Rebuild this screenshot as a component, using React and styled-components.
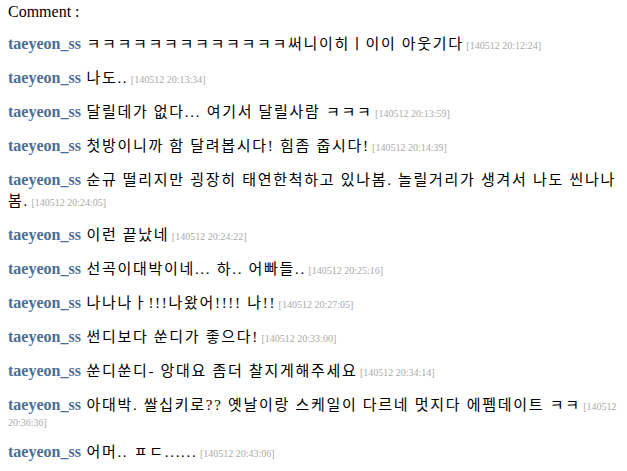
import React from "react";
import styled, { createGlobalStyle } from "styled-components";

const GlobalStyle = createGlobalStyle`
  body {
    margin: 0;
    background: #fff;
  }
`;

// whole board, text flows like an old guestbook page
const Board = styled.div`
  padding: 3px 8px;
  font-family: "Liberation Serif", "Times New Roman", serif;
  color: #000;
`;

const Heading = styled.div`
  font-size: 16px;
  line-height: 18px;
`;

// small base size so a line holding only the stamp stays short
const Entry = styled.div`
  margin-top: 13px;
  font-size: 10px;
  line-height: 13px;
`;

const Name = styled.span`
  font-size: 16px;
  line-height: 18px;
  font-weight: bold;
  color: #4b6e99;
  margin-right: 3px;
`;

const Text = styled.span`
  font-family: "Liberation Serif", "Noto Sans CJK KR", sans-serif;
  font-size: 15px;
  letter-spacing: 1.7px;
  line-height: 21px;
  color: #000;
`;

const Stamp = styled.span`
  font-size: 10px;
  color: #aaa;
`;

const comments = [
  { text: "ㅋㅋㅋㅋㅋㅋㅋㅋㅋㅋㅋㅋㅋ써니이히ㅣ이이 아웃기다", time: "140512 20:12:24" },
  { text: "나도..", time: "140512 20:13:34" },
  { text: "달릴데가 없다... 여기서 달릴사람 ㅋㅋㅋ", time: "140512 20:13:59" },
  { text: "첫방이니까 함 달려봅시다! 힘좀 줍시다!", time: "140512 20:14:39" },
  {
    text: "순규 떨리지만 굉장히 태연한척하고 있나봄. 놀릴거리가 생겨서 나도 씬나나봄.",
    time: "140512 20:24:05",
  },
  { text: "이런 끝났네", time: "140512 20:24:22" },
  { text: "선곡이대박이네... 하.. 어빠들..", time: "140512 20:25:16" },
  { text: "나나나ㅏ!!!나왔어!!!! 나!!", time: "140512 20:27:05" },
  { text: "썬디보다 쑨디가 좋으다!", time: "140512 20:33:00" },
  { text: "쑨디쑨디- 앙대요 좀더 찰지게해주세요", time: "140512 20:34:14" },
  {
    text: "아대박. 쌀십키로?? 옛날이랑 스케일이 다르네 멋지다 에펨데이트 ㅋㅋ",
    time: "140512 20:36:36",
  },
  { text: "어머.. ㅍㄷ......", time: "140512 20:43:06" },
];

export default function App() {
  return (
    <>
      <GlobalStyle />
      <Board>
        <Heading>Comment :</Heading>
        {comments.map((c, i) => (
          <Entry key={i}>
            <Name>taeyeon_ss</Name> <Text>{c.text}</Text> <Stamp>[{c.time}]</Stamp>
          </Entry>
        ))}
      </Board>
    </>
  );
}
